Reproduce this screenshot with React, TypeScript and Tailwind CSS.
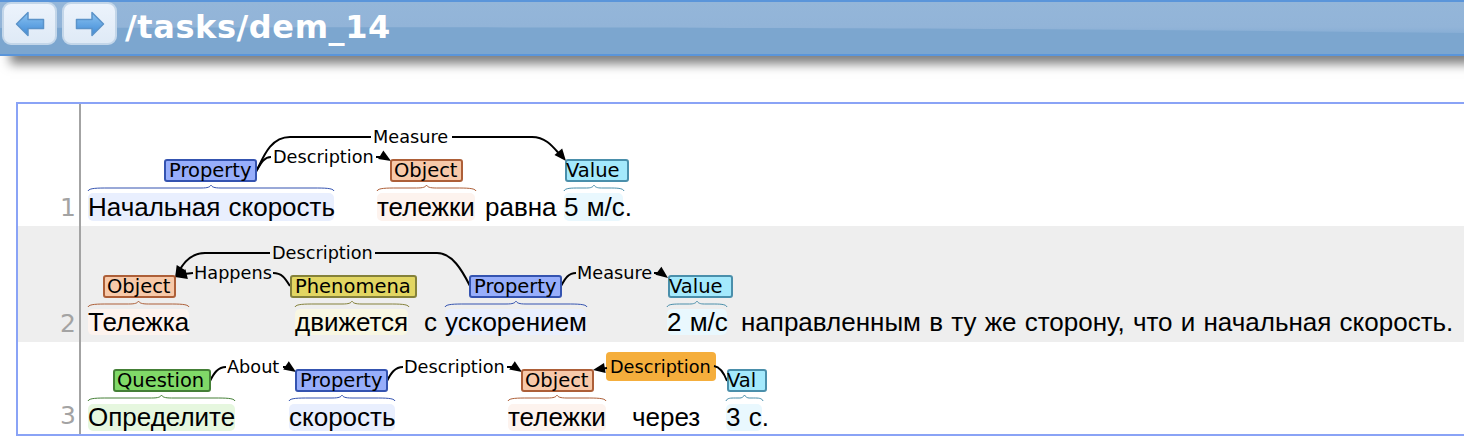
import React from "react";

// page coordinates are kept in the data, the canvas starts right of the gutter
const CANVAS_X = 81;
const CANVAS_W = 1383;

const LABEL_FONT = "font-['DejaVu_Sans',sans-serif]";
const WORD_FONT = "font-['Liberation_Sans',Arial,sans-serif]";

const styles = {
  Property: { chip: "bg-[#97aefb] border-[#3453b0]", brace: "#3453b0", word: "bg-[#e9effe]" },
  Object: { chip: "bg-[#f7c9a9] border-[#ad5f38]", brace: "#ad5f38", word: "bg-[#fdf3ee]" },
  Value: { chip: "bg-[#a4e9fc] border-[#4a8fab]", brace: "#4a8fab", word: "bg-[#e9f8fe]" },
  Phenomena: { chip: "bg-[#e2d662] border-[#84813a]", brace: "#84813a", word: "bg-[#f8f7e3]" },
  Question: { chip: "bg-[#80d968] border-[#447f36]", brace: "#447f36", word: "bg-[#e6f7df]" },
};

type Kind = keyof typeof styles;

interface Chip {
  kind: Kind;
  text: string;
  x: number;
  w: number;
  indent: number;
}

interface Word {
  text: string;
  x: number;
  w?: number;
  kind?: Kind;
}

interface Brace {
  kind: Kind;
  x1: number;
  x2: number;
}

interface ArcLabel {
  text: string;
  x: number;
  y: number;
}

interface Arrow {
  tip: [number, number];
  from: [number, number];
}

interface Row {
  n: number;
  top: number;
  height: number;
  shaded?: boolean;
  chipY: number;
  braceY: number;
  wordY: number;
  wordH: number;
  chips: Chip[];
  braces: Brace[];
  words: Word[];
  labels: ArcLabel[];
  paths: string[];
  arrows: Arrow[];
}

const rows: Row[] = [
  {
    n: 1,
    top: 104,
    height: 122,
    chipY: 159,
    braceY: 187,
    wordY: 193,
    wordH: 28,
    chips: [
      { kind: "Property", text: "Property", x: 164, w: 93, indent: 3 },
      { kind: "Object", text: "Object", x: 390, w: 73, indent: 2 },
      { kind: "Value", text: "Value", x: 565, w: 64, indent: -1 },
    ],
    braces: [
      { kind: "Property", x1: 88, x2: 334 },
      { kind: "Object", x1: 377, x2: 476 },
      { kind: "Value", x1: 564, x2: 624 },
    ],
    words: [
      { text: "Начальная скорость", x: 88, w: 246, kind: "Property" },
      { text: "тележки", x: 377, w: 98, kind: "Object" },
      { text: "равна", x: 485 },
      { text: "5 м/с.", x: 564, w: 59, kind: "Value" },
    ],
    labels: [
      { text: "Measure", x: 373, y: 137 },
      { text: "Description", x: 273, y: 157 },
    ],
    paths: [
      "M256 172 C263 158 270 137 290 137 L371 137",
      "M452 137 L532 137 C548 137 555 150 563 158",
      "M257 170 C261 163 264 157 271 157",
      "M376 157 L384 157",
    ],
    arrows: [
      { tip: [566, 161], from: [556, 149] },
      { tip: [391, 161], from: [382, 155.5] },
    ],
  },
  {
    n: 2,
    top: 226,
    height: 116,
    shaded: true,
    chipY: 275,
    braceY: 303,
    wordY: 309,
    wordH: 26,
    chips: [
      { kind: "Object", text: "Object", x: 103, w: 73, indent: 2 },
      { kind: "Phenomena", text: "Phenomena", x: 290, w: 127, indent: 3 },
      { kind: "Property", text: "Property", x: 469, w: 93, indent: 3 },
      { kind: "Value", text: "Value", x: 668, w: 65, indent: -1 },
    ],
    braces: [
      { kind: "Object", x1: 88, x2: 189 },
      { kind: "Phenomena", x1: 295, x2: 409 },
      { kind: "Property", x1: 445, x2: 587 },
      { kind: "Value", x1: 667, x2: 727 },
    ],
    words: [
      { text: "Тележка", x: 88, w: 101, kind: "Object" },
      { text: "движется", x: 295, w: 113, kind: "Phenomena" },
      { text: "с", x: 424 },
      { text: "ускорением", x: 445, w: 141, kind: "Property" },
      { text: "2 м/с", x: 667, w: 60, kind: "Value" },
      { text: "направленным в ту же сторону, что и начальная скорость.", x: 741 },
    ],
    labels: [
      { text: "Description", x: 272, y: 253 },
      { text: "Happens", x: 194, y: 273 },
      { text: "Measure", x: 577, y: 273 },
    ],
    paths: [
      "M270 253 L205 253 C190 253 182 265 178 273",
      "M375 253 L437 253 C452 253 462 270 470 286",
      "M290 286 C285 278 282 273 273 273",
      "M193 273 L184 274",
      "M561 286 C565 279 568 273 576 273",
      "M654 273 L660 273",
    ],
    arrows: [
      { tip: [175, 278], from: [182, 266] },
      { tip: [175, 277], from: [187, 274] },
      { tip: [668, 278], from: [660, 272] },
    ],
  },
  {
    n: 3,
    top: 342,
    height: 92,
    chipY: 369,
    braceY: 397,
    wordY: 404,
    wordH: 27,
    chips: [
      { kind: "Question", text: "Question", x: 113, w: 98, indent: 2 },
      { kind: "Property", text: "Property", x: 295, w: 93, indent: 3 },
      { kind: "Object", text: "Object", x: 521, w: 73, indent: 2 },
      { kind: "Value", text: "Val", x: 727, w: 40, indent: -2 },
    ],
    braces: [
      { kind: "Question", x1: 88, x2: 235 },
      { kind: "Property", x1: 289, x2: 395 },
      { kind: "Object", x1: 508, x2: 606 },
      { kind: "Value", x1: 726, x2: 763 },
    ],
    words: [
      { text: "Определите", x: 88, w: 147, kind: "Question" },
      { text: "скорость", x: 289, w: 106, kind: "Property" },
      { text: "тележки", x: 508, w: 98, kind: "Object" },
      { text: "через", x: 632 },
      { text: "3 с.", x: 726, w: 36, kind: "Value" },
    ],
    labels: [
      { text: "About", x: 227, y: 367 },
      { text: "Description", x: 404, y: 367 },
      { text: "Description", x: 610, y: 367 },
    ],
    paths: [
      "M210 381 C214 373 218 367 226 367",
      "M283 367 L288 367",
      "M387 381 C391 373 395 367 403 367",
      "M507 367 L513 367",
      "M607 368 L600 369",
      "M714 366 C720 367 724 373 727 381",
    ],
    arrows: [
      { tip: [296, 372], from: [287, 366] },
      { tip: [522, 372], from: [513, 366] },
      { tip: [593, 370], from: [605, 368] },
    ],
  },
];

const arrowPoints = ({ tip, from }: Arrow) => {
  const dx = tip[0] - from[0];
  const dy = tip[1] - from[1];
  const len = Math.hypot(dx, dy);
  const ux = dx / len;
  const uy = dy / len;
  const bx = tip[0] - ux * 12;
  const by = tip[1] - uy * 12;
  return `${tip[0]},${tip[1]} ${bx - uy * 5},${by + ux * 5} ${bx + uy * 5},${by - ux * 5}`;
};

const bracePath = (x1: number, x2: number, y: number) => {
  const mid = (x1 + x2) / 2;
  const c = Math.min(10, (x2 - x1) / 8);
  return `M${x1} ${y + 4} C${x1 + 1} ${y + 1} ${x1 + c} ${y + 1} ${x1 + c * 2} ${y + 1} L${mid - c} ${y + 1} C${mid - 3} ${y + 1} ${mid - 1} ${y} ${mid} ${y - 2} C${mid + 1} ${y} ${mid + 3} ${y + 1} ${mid + c} ${y + 1} L${x2 - c * 2} ${y + 1} C${x2 - c} ${y + 1} ${x2 - 1} ${y + 1} ${x2} ${y + 4}`;
};

const NavButton: React.FC<{ flip?: boolean }> = ({ flip }) => (
  <button className="flex h-[43px] w-[55px] items-center justify-center rounded-[9px] border-2 border-[#c3d6e9] bg-gradient-to-b from-[#ecf3fc] to-[#dfeaf6]">
    <svg width="30" height="26" viewBox="0 0 30 26" className={flip ? "-scale-x-100" : ""}>
      <defs>
        <linearGradient id={flip ? "arrowB" : "arrowA"} x1="0" y1="0" x2="0" y2="1">
          <stop offset="0" stopColor="#8cc4f2" />
          <stop offset="1" stopColor="#3f8ad6" />
        </linearGradient>
      </defs>
      <path
        d="M1.5 13 L13 1.5 L13 8.5 L28.5 8.5 L28.5 17.5 L13 17.5 L13 24.5 Z"
        fill={`url(#${flip ? "arrowB" : "arrowA"})`}
        stroke="#5b93c9"
        strokeWidth="1.5"
        strokeLinejoin="round"
      />
    </svg>
  </button>
);

const DiagramRow: React.FC<{ row: Row }> = ({ row }) => (
  <div
    className={`flex ${row.shaded ? "bg-[#eeeeee]" : "bg-white"}`}
    style={{ height: row.height }}
  >
    <div
      className={`flex w-[63px] shrink-0 items-end justify-end border-r-2 border-[#a3a3a3] pr-[3px] pb-[3px] ${LABEL_FONT} text-[25px] leading-[30px] text-[#a3a3a3]`}
    >
      {row.n}
    </div>
    <div className="relative flex-1 overflow-hidden">
      <svg
        className="absolute top-0 left-0 z-10"
        width={CANVAS_W}
        height={row.height}
        viewBox={`${CANVAS_X} ${row.top} ${CANVAS_W} ${row.height}`}
        fill="none"
      >
        {row.braces.map((b) => (
          <path
            key={b.x1}
            d={bracePath(b.x1, b.x2, row.braceY)}
            stroke={styles[b.kind].brace}
            strokeWidth="1"
          />
        ))}
        {row.paths.map((d) => (
          <path key={d} d={d} stroke="#000" strokeWidth="2" />
        ))}
        {row.arrows.map((a) => (
          <polygon key={`${a.tip}-${a.from}`} points={arrowPoints(a)} fill="#000" />
        ))}
      </svg>

      {/* the orange arc label sits under the text of row 3 */}
      {row.n === 3 && (
        <div
          className="absolute h-[29px] w-[110px] rounded-[4px] bg-[#f5ae3c]"
          style={{ left: 606 - CANVAS_X, top: 352 - row.top }}
        />
      )}

      {row.words.map((w) => (
        <div
          key={w.x}
          className={`absolute rounded-[5px] whitespace-nowrap text-black ${WORD_FONT} text-[26px] [word-spacing:1px] ${w.kind ? styles[w.kind].word : ""}`}
          style={{
            left: w.x - CANVAS_X,
            top: row.wordY - row.top,
            width: w.w,
            height: row.wordH,
            lineHeight: `${row.wordH}px`,
          }}
        >
          {w.text}
        </div>
      ))}

      {row.chips.map((c) => (
        <div
          key={c.x}
          className={`absolute z-20 h-[23px] rounded-[3px] border-2 ${styles[c.kind].chip} ${LABEL_FONT} text-[19.5px] leading-[19px] whitespace-nowrap text-black`}
          style={{
            left: c.x - CANVAS_X,
            top: row.chipY - row.top,
            width: c.w,
            textIndent: c.indent,
          }}
        >
          {c.text}
        </div>
      ))}

      {row.labels.map((l) => (
        <div
          key={l.x}
          className={`absolute z-20 ${LABEL_FONT} text-[17.7px] leading-[20px] whitespace-nowrap text-black`}
          style={{ left: l.x - CANVAS_X, top: l.y - row.top - 10 }}
        >
          {l.text}
        </div>
      ))}
    </div>
  </div>
);

export default function App() {
  return (
    <div className="h-[442px] w-[1464px] overflow-hidden bg-white">
      <div className="relative flex h-[56px] items-start gap-[5px] border-y-2 border-[#5a95da] bg-[#7ca6cf] shadow-[10px_8px_10px_rgba(0,0,0,0.5)]">
        <svg className="absolute top-0 left-0" width="1464" height="34" viewBox="0 0 1464 34">
          <defs>
            <linearGradient id="gloss" x1="0" y1="0" x2="0" y2="1">
              <stop offset="0" stopColor="#94b6d9" />
              <stop offset="0.8" stopColor="#92b4d8" />
              <stop offset="1" stopColor="#88aed5" />
            </linearGradient>
          </defs>
          <path d="M0 0 H1464 V31 C1100 27 700 24 0 26 Z" fill="url(#gloss)" />
        </svg>
        <div className="relative flex gap-[5px] pl-[2px]">
          <NavButton />
          <NavButton flip />
        </div>
        <h1 className="relative ml-[3px] font-['DejaVu_Sans',sans-serif] text-[32px] leading-[50px] font-bold tracking-[0.6px] text-white">
          /tasks/dem_14
        </h1>
      </div>

      <div className="mt-[46px] ml-4 border-y-2 border-l-2 border-[#8aa3f6]">
        {rows.map((row) => (
          <DiagramRow key={row.n} row={row} />
        ))}
      </div>
    </div>
  );
}
